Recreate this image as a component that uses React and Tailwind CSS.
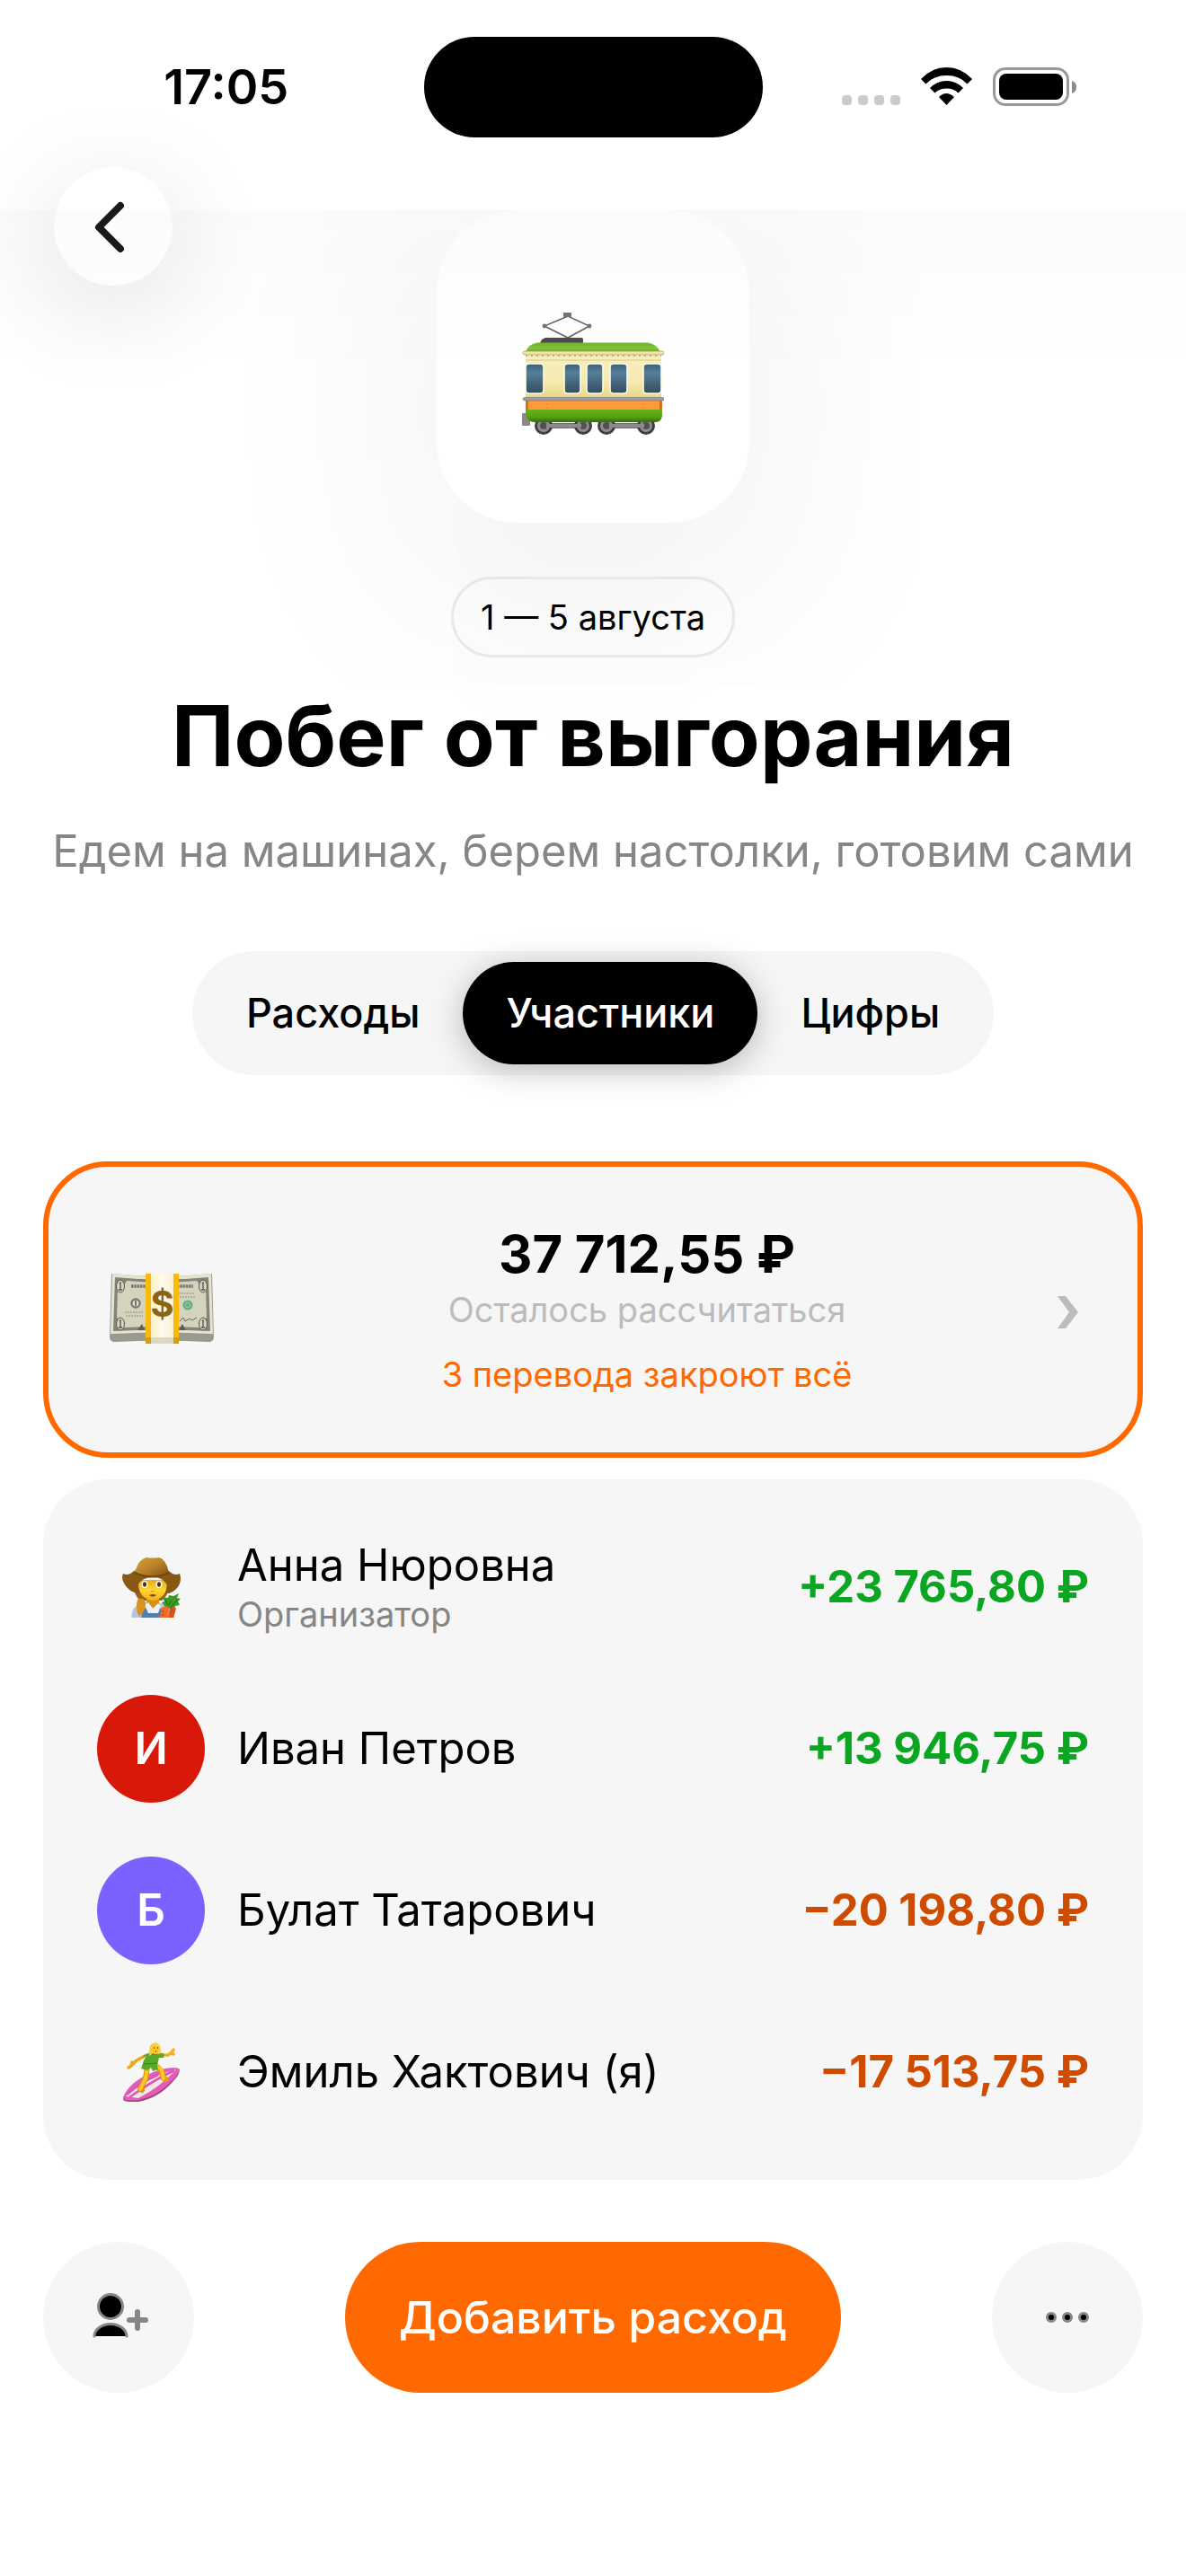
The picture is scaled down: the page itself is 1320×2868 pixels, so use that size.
import { useState } from "react";

const TABS = [
  { key: "expenses", label: "Расходы" },
  { key: "members", label: "Участники" },
  { key: "numbers", label: "Цифры" },
];

const MEMBERS = [
  { name: "Анна Нюровна", role: "Организатор", amount: "+23 765,80 ₽", positive: true, avatar: "farmer" },
  { name: "Иван Петров", amount: "+13 946,75 ₽", positive: true, initial: "И", color: "bg-[#d81909]" },
  { name: "Булат Татарович", amount: "−20 198,80 ₽", positive: false, initial: "Б", color: "bg-[#7b61ff]" },
  { name: "Эмиль Хактович (я)", amount: "−17 513,75 ₽", positive: false, avatar: "surfer" },
];

function Tram() {
  const windows = [
    [4, 20],
    [47, 18],
    [72, 18],
    [98, 19],
    [135, 20],
  ];
  return (
    <svg className="w-[158px] h-[136px]" viewBox="0 0 158 136" role="img" aria-label="Трамвай">
      <defs>
        <linearGradient id="tram-roof" x1="0" y1="0" x2="0" y2="1">
          <stop offset="0" stopColor="#6db52a" />
          <stop offset="0.6" stopColor="#84c637" />
          <stop offset="1" stopColor="#5da01d" />
        </linearGradient>
        <linearGradient id="tram-body" x1="0" y1="0" x2="0" y2="1">
          <stop offset="0" stopColor="#f7efc4" />
          <stop offset="0.6" stopColor="#f5eab0" />
          <stop offset="1" stopColor="#e6d384" />
        </linearGradient>
        <linearGradient id="tram-window" x1="0" y1="0" x2="0" y2="1">
          <stop offset="0" stopColor="#3c5f76" />
          <stop offset="0.3" stopColor="#557f99" />
          <stop offset="1" stopColor="#344c5e" />
        </linearGradient>
        <linearGradient id="tram-skirt" x1="0" y1="0" x2="0" y2="1">
          <stop offset="0" stopColor="#6bb01f" />
          <stop offset="0.6" stopColor="#56a112" />
          <stop offset="1" stopColor="#336d08" />
        </linearGradient>
      </defs>
      <path d="M51 4L25 15l26 13 24-13z" fill="none" stroke="#66666a" strokeWidth="1.6" />
      <rect x="46" y="0" width="9" height="5" rx="1" fill="#747478" />
      <circle cx="25" cy="15" r="2.4" fill="#747478" />
      <circle cx="75" cy="15" r="2.4" fill="#747478" />
      <path d="M20 34l2-4 4-2h40q2 0 2 2v4z" fill="#4c4a4d" />
      <path d="M4 44q3-9 13-10.500h123q10 1.500 14 10.500z" fill="url(#tram-roof)" />
      <rect x="24" y="123" width="45" height="6" fill="#6e6e70" />
      <rect x="94" y="123" width="45" height="6" fill="#6e6e70" />
      {[24, 68, 94, 138].map((x) => (
        <g key={x}>
          <circle cx={x} cy="126" r="10" fill="#3f3f42" />
          <circle cx={x} cy="126" r="7" fill="#8e8e91" />
          <circle cx={x} cy="126" r="4" fill="#515154" />
        </g>
      ))}
      <path d="M27 126h39M97 126h39" stroke="#8b8b8d" strokeWidth="4" />
      <rect x="0" y="112" width="9" height="14" rx="1" fill="#89898b" />
      <rect x="4" y="44" width="151" height="54" fill="url(#tram-body)" />
      <path d="M4 48h151" stroke="#cbb871" strokeWidth="2" strokeDasharray="2 4" />
      <path d="M4 53h151" stroke="#e4d594" strokeWidth="1.500" />
      <rect x="1" y="43" width="157" height="4" rx="2" fill="#efe4ac" stroke="#b5a15d" strokeWidth="0.800" />
      {windows.map(([x, w]) => (
        <rect key={x} x={x} y="57" width={w} height="33" rx="4" fill="url(#tram-window)" stroke="#fffbe1" strokeWidth="1.600" />
      ))}
      <rect x="4" y="98" width="152" height="10" fill="#ff9a37" />
      <path d="M4 98h3v10H4zM153 98h3v10h-3z" fill="#dc6b1e" />
      <path d="M4 108h152v6q0 7-7 8H13q-7-1-9-8z" fill="url(#tram-skirt)" />
      <path d="M28 101v16M135 101v16" stroke="#8e7c25" strokeWidth="0.800" strokeDasharray="1 3" />
      <rect x="1" y="94.500" width="157" height="3.500" rx="1.700" fill="#9b9daa" stroke="#6c6e79" strokeWidth="0.600" />
    </svg>
  );
}

function Money() {
  return (
    <svg className="w-[120px] h-[80px] mr-6" viewBox="-2 0 120 80" role="img" aria-label="Деньги">
      <defs>
        <linearGradient id="money-band" x1="0" y1="0" x2="1" y2="0">
          <stop offset="0" stopColor="#fdf0c4" />
          <stop offset="0.5" stopColor="#fffaf0" />
          <stop offset="1" stopColor="#fbf1cf" />
        </linearGradient>
      </defs>
      <path d="M2 1q56 6 112 0l2 70q0 6-6 6-52-3-104 0-6 0-6-6z" fill="#9a9b8e" />
      <path d="M3 1q55 6 110 0l2 67q-57-3-114 0z" fill="#e6e4cf" />
      <path d="M6 5q52 5 104 0l2 60q-54-3-108 0z" fill="#83847a" />
      <path d="M19 9q39 3 78 0 4 6 10 8l1 33q-7 4-8 11-42-2-84 0-1-7-8-11l1-33q7-2 10-8z" fill="#d5d3bd" />
      {[[12, 15], [104, 15], [12, 57], [104, 57]].map(([cx, cy]) => (
        <g key={`${cx}-${cy}`}>
          <ellipse cx={cx} cy={cy} rx="4.500" ry="7" fill="#d5d3bd" stroke="#55564f" />
          <path d={`M${cx - 1} ${cy - 3}l1-1v8m-2 0h4`} fill="none" stroke="#55564f" strokeWidth="1.300" />
        </g>
      ))}
      <path d="M24 15h18M75 15h18" stroke="#777868" strokeWidth="3.500" strokeDasharray="2.500 0.800" />
      <path d="M17 44h20M18 48h19M77 23h18M78 27h18" stroke="#a5a592" strokeWidth="1.300" strokeDasharray="2 1" />
      <circle cx="29" cy="34" r="4.600" fill="#e2e0cc" stroke="#74756d" strokeWidth="2.200" />
      <path d="M29 31v6" stroke="#74756d" strokeWidth="2" />
      <circle cx="87" cy="36" r="5.500" fill="#63ad83" />
      <circle cx="87" cy="36" r="2.800" fill="none" stroke="#a5cdb0" />
      <path d="M78 54l4-4 2 4 5-3 3 2 5-3" fill="none" stroke="#66675e" />
      <path d="M31 64l5-7 3 7zM77 64l4-7 4 7z" fill="#5c5d55" />
      <rect x="40" y="1" width="37" height="78" fill="#f9ba0b" />
      <rect x="46" y="1" width="25" height="71" fill="url(#money-band)" />
      <path d="M40 72h37v7H40z" fill="#d79d09" />
      <path d="M46 72h25v7H46z" fill="#dfd8c1" />
      <text x="58.500" y="49" textAnchor="middle" fontFamily="Inter, sans-serif" fontSize="40" fontWeight="700" fill="#8b6412">
        $
      </text>
    </svg>
  );
}

function Farmer() {
  return (
    <svg className="w-[65px] h-[67px]" viewBox="0 0 65 67" role="img" aria-label="Фермер">
      <defs>
        <linearGradient id="hat" x1="0" y1="0" x2="1" y2="1">
          <stop offset="0" stopColor="#d69f3b" />
          <stop offset="0.500" stopColor="#b9822a" />
          <stop offset="1" stopColor="#7e5012" />
        </linearGradient>
        <linearGradient id="farmer-face" x1="0" y1="0" x2="0" y2="1">
          <stop offset="0" stopColor="#e7ae20" />
          <stop offset="0.500" stopColor="#ffd52f" />
          <stop offset="1" stopColor="#f0af18" />
        </linearGradient>
      </defs>
      <path d="M14 26q-3 14 6 22h24q10-8 8-22z" fill="#9b6115" />
      <path d="M10 67q1-13 10-15l14-3 14 3q9 3 10 15z" fill="#b9c5dc" />
      <path d="M21 67l2-10 5-1 2 6h8l2-6 4 1v10z" fill="#567fa8" />
      <path d="M27 46h14v7q-6 6-14 0z" fill="#d8920e" />
      <path d="M25 53l4-3 5 7 6-6 3 3-3 8H29z" fill="#edf0f5" />
      <path d="M18 25h32q1 21-16 23-17-2-16-23z" fill="url(#farmer-face)" />
      <path d="M17 47q8-4 9 4 0 8-7 15-5-8-2-19z" fill="#d8941e" />
      <ellipse cx="25" cy="30" rx="3.500" ry="4" fill="#fff" />
      <ellipse cx="41" cy="30" rx="3.500" ry="4" fill="#fff" />
      <ellipse cx="25" cy="30" rx="2" ry="2.800" fill="#50301a" />
      <ellipse cx="41" cy="30" rx="2" ry="2.800" fill="#50301a" />
      <path d="M32 37q2 2 4 0" fill="none" stroke="#d9951a" />
      <path d="M30 42q4-2 8 0-4 3-8 0z" fill="#75471b" />
      <path d="M1 18q6 3 12-3 20-7 39 0 6 6 12 3 3 9-3 16-6 7-13 6l2-9q-4-9-16-9t-17 9l2 9q-8 0-14-7-7-8-4-15z" fill="#875914" />
      <path d="M14 16Q19 1 27 0q7 1 14 0 8 2 11 17-18 8-38-1z" fill="url(#hat)" />
      <path d="M14 17q19 9 38 0" fill="none" stroke="#754807" strokeWidth="2" />
      <path d="M49 56l-5-6 3-1-2-5 6 1 1-3 5 1 6-3-2 5 4 1-3 3 2 4-5 1-1 4z" fill="#3a9c25" />
      <path d="M50 55l5-7m-2 9l8-10M50 52l-2-5" stroke="#1d6713" />
      <path d="M42 67l2-11q6-4 8 0l-1 11z" fill="#f26c22" />
      <path d="M51 67l2-10q4-4 7 0l-3 10z" fill="#dd5216" />
      <path d="M44 60h3m-3 4h3m7-4h3" stroke="#b83b0c" />
    </svg>
  );
}

function Surfer() {
  return (
    <svg className="w-[63px] h-[66px]" viewBox="0 0 63 66" role="img" aria-label="Сёрфер">
      <path d="M0 63Q7 45 31 35q19-8 31-6 3 5-7 15-16 18-38 22-17 1-17-3z" fill="#9d477f" />
      <path d="M0 61Q7 44 31 34q19-8 31-5 2 5-8 14Q38 60 17 64 0 66 0 61z" fill="#e45bbc" />
      <path d="M3 60Q24 39 59 30 42 49 17 62z" fill="#f2e8df" />
      <path d="M7 61Q32 43 57 31M4 58Q20 44 39 36" fill="none" stroke="#dc55b4" strokeWidth="2.500" />
      <g fill="none" strokeLinecap="round" strokeLinejoin="round">
        <path d="M27 27l-2 13-6 12 2 1" stroke="#dd960c" strokeWidth="6" />
        <path d="M27 28l-2 12-6 12" stroke="#ffc51d" strokeWidth="4" />
        <path d="M37 26l6 6 2 8 3 1" stroke="#e29f0e" strokeWidth="6" />
        <path d="M37 26l6 5 2 9" stroke="#ffc923" strokeWidth="3.500" />
        <path d="M24 15l-9 5-6 6-3 2m3-2l1-4" stroke="#eda913" strokeWidth="3.500" />
        <path d="M42 14l8 0 4-3 2-3m-3 4l3 1" stroke="#f4b31a" strokeWidth="3.500" />
      </g>
      <path d="M25 13l6-2h9l6 2-1 4-5 0-2 8 1 5-6 2-2-4-4 3-7-2 3-9 3-5-5 2z" fill="#58a92a" />
      <path d="M23 24l15-1M31 12q4 3 9 0" fill="none" stroke="#357e19" />
      <path d="M29 10q0-10 7-10 6 1 6 9l-1 4-8-1-4 3z" fill="#f3cf57" />
      <path d="M31 6l5-3 4 3-1 6q-5 3-8-2z" fill="#ffc526" />
      <path d="M34 6h1m3 0h1m-3 4h1" stroke="#694318" strokeWidth="1.400" />
    </svg>
  );
}

function Avatar({ member }) {
  if (member.initial) {
    return (
      <div className={`w-[120px] h-[120px] rounded-full flex items-center justify-center shrink-0 text-[49px] leading-[60px] font-semibold text-white ${member.color}`}>
        {member.initial}
      </div>
    );
  }
  return (
    <div className="w-[120px] h-[120px] flex items-center justify-center shrink-0">
      {member.avatar === "farmer" ? <Farmer /> : <Surfer />}
    </div>
  );
}

function StatusBar() {
  return (
    <div className="grid grid-cols-[1fr_377px_1fr] items-center pt-[41px]">
      <div className="pl-8 text-center text-[54px] leading-[60px] font-semibold">17:05</div>
      <div className="h-[112px] rounded-full bg-black" />
      <div className="flex justify-end pr-[121px]">
        <svg className="w-[262px] h-[44px]" viewBox="0 0 262 44" role="img" aria-label="Wi-Fi, батарея">
          <g fill="#cbcbcb">
            <rect x="0" y="31" width="11" height="11" rx="4" />
            <rect x="18" y="31" width="11" height="11" rx="4" />
            <rect x="36" y="31" width="11" height="11" rx="4" />
            <rect x="54" y="31" width="11" height="11" rx="4" />
          </g>
          <path d="M88 13Q100 0 116.500 0T145 13l-5.500 5.500Q131 9 116.500 9T93.500 18.500z" />
          <path d="M98 23q8-8 18.500-8T135 23l-5.500 5.500q-5-5-13-5t-13 5z" />
          <path d="M108 33q8-8 17 0l-8.500 9z" />
          <rect x="169.500" y="1.500" width="82" height="40" rx="12.500" fill="none" stroke="#999" strokeWidth="3" />
          <rect x="175" y="7" width="71" height="29" rx="8" />
          <path d="M256 15q5 1.500 5 7t-5 7z" fill="#8c8c8c" />
        </svg>
      </div>
    </div>
  );
}

export default function App() {
  const [activeTab, setActiveTab] = useState("members");

  return (
    <div className="min-h-screen bg-white text-black font-['Inter','Liberation_Sans',sans-serif]">
      {/* Header */}
      <header className="relative z-10 h-[234px] bg-white">
        <StatusBar />
        <button
          aria-label="Назад"
          className="absolute left-[60px] top-[186px] w-[132px] h-[132px] rounded-full bg-white flex items-center justify-center shadow-[0_24px_120px_rgba(0,0,0,0.12)]"
        >
          <svg className="w-[132px] h-[132px]" viewBox="0 0 132 132" fill="none" stroke="#1a1a1a" strokeWidth="8" strokeLinecap="round" strokeLinejoin="round">
            <path d="M74 43L50 67l24 24" />
          </svg>
        </button>
      </header>

      <main className="relative overflow-hidden px-12 pb-[204px]">
        <div className="pointer-events-none absolute inset-x-0 top-0 z-10 h-[190px] bg-linear-to-b from-black/[0.015] to-transparent" />

        {/* Trip info */}
        <section className="flex flex-col items-center text-center">
          <div className="w-[348px] h-[348px] rounded-[90px] bg-white flex items-center justify-center pt-[15px] shadow-[0_60px_240px_48px_rgba(0,0,0,0.06)]">
            <Tram />
          </div>
          <div className="relative mt-[60px] h-[90px] px-[30px] flex items-center rounded-full border-[3px] border-[#e8e8e8] text-[38px] leading-[48px]">
            1 — 5 августа
          </div>
          <h1 className="relative mt-[33px] text-[93px] leading-[108px] font-bold">Побег от выгорания</h1>
          <p className="relative mt-[45px] text-[49px] leading-[60px] text-[#868686] whitespace-nowrap">
            Едем на машинах, берем настолки, готовим сами
          </p>
        </section>

        {/* Tabs */}
        <div className="mt-[81px] flex justify-center">
          <div role="tablist" className="flex rounded-full bg-[#f6f6f6] p-3">
            {TABS.map((tab) => (
              <button
                key={tab.key}
                role="tab"
                aria-selected={activeTab === tab.key}
                onClick={() => setActiveTab(tab.key)}
                className={`h-[114px] px-12 rounded-full text-[45px] leading-[54px] font-medium ${
                  activeTab === tab.key ? "bg-black text-white shadow-[0_6px_36px_rgba(0,0,0,0.25)]" : "text-black"
                }`}
              >
                {tab.label}
              </button>
            ))}
          </div>
        </div>

        {/* Remaining balance */}
        <button className="mt-24 w-full flex items-center rounded-[72px] border-[6px] border-[#ff6900] bg-[#f6f6f6] px-[66px] pt-[60px] pb-[63px]">
          <Money />
          <span className="flex-1 flex flex-col items-center">
            <span className="text-[58px] leading-[75px] font-bold">37 712,55 ₽</span>
            <span className="text-[38px] leading-[48px] text-[#bcbcbc]">Осталось рассчитаться</span>
            <span className="mt-6 text-[38px] leading-[48px] text-[#ff6900]">3 перевода закроют всё</span>
          </span>
          <svg className="w-6 h-9 mt-2" viewBox="0 0 24 36" fill="#bcbcbc">
            <path d="M1 0h9l14 18-14 18H1l13-18z" />
          </svg>
        </button>

        {/* Members */}
        <ul className="mt-6 rounded-[72px] bg-[#f6f6f6] px-[60px] py-[30px]">
          {MEMBERS.map((member) => (
            <li key={member.name} className="h-[180px] flex items-center gap-9">
              <Avatar member={member} />
              <div className="flex-1">
                <p className="text-[49px] leading-[60px]">{member.name}</p>
                {member.role && <p className="text-[38px] leading-[48px] text-[#868686]">{member.role}</p>}
              </div>
              <span className={`text-[49px] leading-[60px] font-bold whitespace-nowrap ${member.positive ? "text-[#0aa622]" : "text-[#cf4b00]"}`}>
                {member.amount}
              </span>
            </li>
          ))}
        </ul>

        {/* Actions */}
        <div className="mt-[69px] flex items-center justify-between">
          <button aria-label="Пригласить участника" className="w-[168px] h-[168px] rounded-full bg-[#f6f6f6] flex items-center justify-center">
            <svg className="w-[72px] h-[72px]" viewBox="0 0 24 24" stroke="#868686" strokeLinecap="round">
              <circle cx="9" cy="8" r="4.500" fill="#000" />
              <path d="M3 19c0-2.500 2.700-4.500 6-4.500s6 2 6 4.500" fill="#000" />
              <path d="M19 10v6M16 13h6" strokeWidth="2" />
            </svg>
          </button>
          <button className="h-[168px] px-[60px] rounded-full bg-[#ff6900] text-white text-[50px] leading-[60px] font-medium">
            Добавить расход
          </button>
          <button aria-label="Ещё" className="w-[168px] h-[168px] rounded-full bg-[#f6f6f6] flex items-center justify-center">
            <svg className="w-[72px] h-[72px]" viewBox="0 0 24 24" fill="#000" stroke="#868686">
              <circle cx="6" cy="12" r="1.500" />
              <circle cx="12" cy="12" r="1.500" />
              <circle cx="18" cy="12" r="1.500" />
            </svg>
          </button>
        </div>
      </main>
    </div>
  );
}
